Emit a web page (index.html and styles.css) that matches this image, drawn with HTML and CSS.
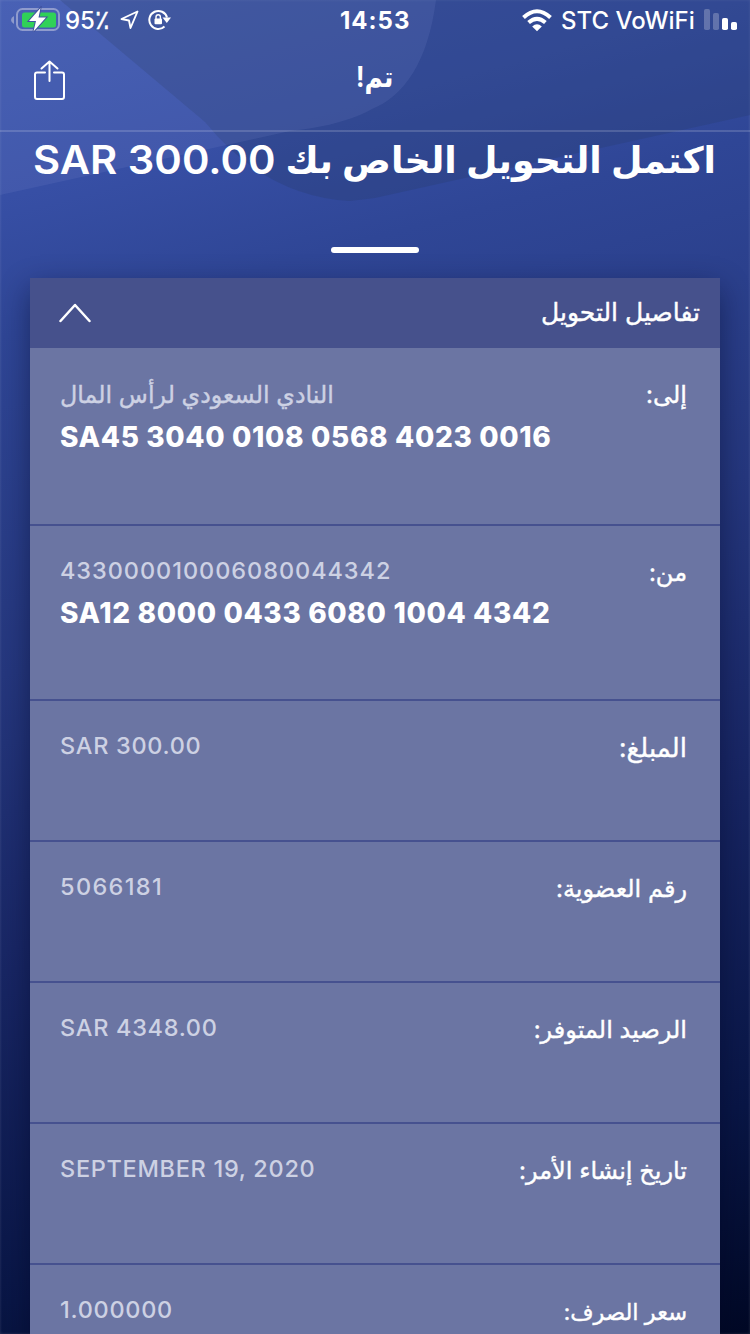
FILE: index.html
```html
<!DOCTYPE html>
<html lang="ar" dir="rtl">
<head>
<meta charset="utf-8">
<title>تم!</title>
<link rel="stylesheet" href="styles.css">
</head>
<body>
<div class="screen">
  <svg class="backdrop" viewBox="0 0 750 210" aria-hidden="true">
    <path class="shade-dark" d="M60 0L205 122Q265 196 350 201L375 198L750 115V0Z"/>
    <path class="shade-light" d="M0 0H436C428 62 404 96 372 109C345 124 310 129 290 131L0 195Z"/>
  </svg>
  <div class="statusbar" dir="ltr">
    <svg class="battery" width="50" height="26" viewBox="0 0 50 26">
      <path d="M3 10v8q-3-1.500-3-4t3-4z" fill="#8e9acb"/>
      <rect x="6" y="3" width="42" height="21" rx="5.500" fill="none" stroke="#8f9bcd" stroke-width="2"/>
      <rect x="11" y="6.500" width="34" height="15" rx="2.500" fill="#30d158"/>
      <path d="M29.500 2L18 15h7l-2.500 10.500L35 11.500h-7.500z" fill="#fff" stroke="#40539f" stroke-width="2" paint-order="stroke"/>
    </svg>
    <span class="percent">95<span class="sign">٪</span></span>
    <svg class="locate" width="20" height="20" viewBox="0 0 20 20"><path d="M17.500 1.500L1.500 9l7.500 1.500L10.500 18z" fill="none" stroke="#fff" stroke-width="1.900" stroke-linejoin="round"/></svg>
    <svg class="rotation" width="24" height="22" viewBox="0 0 24 22">
      <path d="M16.500 17.500A9 9 0 1 1 19 8.500" fill="none" stroke="#fff" stroke-width="2"/>
      <path d="M14.500 8.500H23l-4.200 5.500z" fill="#fff"/>
      <rect x="6.500" y="9.500" width="7.500" height="5.800" rx="1" fill="#fff"/>
      <path d="M8 10V8a2.200 2.200 0 0 1 4.400 0v2" fill="none" stroke="#fff" stroke-width="1.400"/>
    </svg>
    <span class="clock">14:53</span>
    <svg class="wifi" width="30" height="23" viewBox="0 0 30 23" fill="none" stroke="#fff" stroke-width="4">
      <path d="M1.500 8.500Q15-4 28.500 8.500"/>
      <path d="M6.600 13.600Q15 6.200 23.400 13.600"/>
      <path d="M10.200 17.500Q15 13.200 19.800 17.500L15 22.300z" fill="#fff" stroke="none"/>
    </svg>
    <span class="carrier">STC VoWiFi</span>
    <svg class="signal" width="34" height="22" viewBox="0 0 34 22" fill="#fff">
      <rect x="0" y="0" width="6" height="21" rx="1.800" opacity=".24"/>
      <rect x="9" y="4" width="6" height="17" rx="1.800" opacity=".24"/>
      <rect x="18" y="9" width="6" height="12" rx="1.800"/>
      <rect x="27" y="13" width="6" height="8" rx="1.800"/>
    </svg>
  </div>
  <header class="navbar">
    <h1 class="title">تم!</h1>
    <svg class="share" width="32" height="42" viewBox="0 0 32 42" fill="none" stroke="#fff" stroke-width="2" stroke-linejoin="round" stroke-linecap="round">
      <path d="M11 12.500H3Q1 12.500 1 14.500V37Q1 39 3 39H28Q30 39 30 37V14.500Q30 12.500 28 12.500H20M15.500 21V1.500M7.500 8.500L15.500 1.500L23.500 8.500"/>
    </svg>
  </header>
  <main>
    <h2 class="headline"><span class="headline-text">اكتمل التحويل الخاص بك</span><bdi class="headline-sum">SAR 300.00</bdi></h2>
    <div class="divider"></div>
    <section class="card">
      <div class="card-head">
        <span class="card-title">تفاصيل التحويل</span>
        <svg class="chevron" width="32" height="20" viewBox="0 0 32 20" fill="none" stroke="#fff" stroke-width="2.500" stroke-linecap="round" stroke-linejoin="round"><path d="M1.500 18L16 2L30.500 18"/></svg>
      </div>
      <div class="row row-to"><span class="label">إلى:</span><div class="value"><span class="bank">النادي السعودي لرأس المال</span><b class="iban">SA45 3040 0108 0568 4023 0016</b></div></div>
      <div class="row row-from"><span class="label">من:</span><div class="value"><span class="account">433000010006080044342</span><b class="iban">SA12 8000 0433 6080 1004 4342</b></div></div>
      <div class="row"><span class="label label-amount">المبلغ:</span><div class="value">SAR 300.00</div></div>
      <div class="row"><span class="label">رقم العضوية:</span><div class="value value-member">5066181</div></div>
      <div class="row"><span class="label">الرصيد المتوفر:</span><div class="value">SAR 4348.00</div></div>
      <div class="row"><span class="label">تاريخ إنشاء الأمر:</span><div class="value">SEPTEMBER 19, 2020</div></div>
      <div class="row"><span class="label label-rate">سعر الصرف:</span><div class="value">1.000000</div></div>
    </section>
  </main>
</div>
</body>
</html>
```
FILE: styles.css
```css
* { box-sizing: border-box; }
body { margin: 0; }
.screen {
  position: relative;
  width: 750px;
  height: 1334px;
  overflow: hidden;
  color: #fff;
  font-family: Inter, "DejaVu Sans", sans-serif;
  background: linear-gradient(165deg, #3f59b0 0%, #374fa5 13%, #2f4696 22%, #25377e 44%, #192766 62%, #091646 85%, #010825 100%);
  box-shadow: inset 0 0 3px rgba(255, 255, 255, .16);
}
.backdrop { position: absolute; top: 0; left: 0; width: 750px; height: 210px; }
.shade-dark { fill: #2b3f76; fill-opacity: .38; }
.shade-light { fill: #8497d8; fill-opacity: .14; }
.statusbar {
  position: relative;
  display: flex;
  align-items: center;
  height: 40px;
  padding-left: 11px;
  white-space: nowrap;
}
.battery { margin-top: -3px; }
.percent { width: 53px; margin-left: 4px; padding-top: 1px; font-size: 24px; line-height: 40px; font-weight: 500; }
.sign { display: inline-block; font-size: 27px; line-height: 30px; -webkit-text-stroke: .4px #fff; }
.locate { margin-left: 2px; }
.rotation { margin-left: 8px; }
.clock { width: 72px; margin-left: 168px; font-size: 24px; font-weight: 700; letter-spacing: 1px; }
.wifi { margin-left: 110px; }
.carrier { width: 136px; margin-left: 9px; font-size: 24px; font-weight: 500; }
.clock, .carrier { padding-top: 1px; }
.signal { margin-left: 7px; }
.navbar {
  position: relative;
  display: grid;
  grid-template-columns: 1fr auto 1fr;
  align-items: center;
  height: 92px;
  padding: 0 34px 8px;
  border-bottom: 2px solid rgba(255, 255, 255, .16);
}
.title { grid-column: 2; margin: 0 0 9px; font-size: 29px; line-height: 40px; font-weight: 700; transform: scaleX(.86); }
.share { justify-self: end; }
main { position: relative; padding: 0 30px; }
.headline {
  display: flex;
  justify-content: space-between;
  align-items: center;
  height: 55px;
  margin: 0;
  padding: 0 4px;
  font-size: 39px;
  font-weight: 600;
  white-space: nowrap;
}
.headline-text { font-size: 36.300px; }
.headline-sum { transform: scaleX(1.07); transform-origin: left; margin-left: -1px; }
.divider { width: 88px; height: 6px; margin: 60px auto 25px; border-radius: 3px; background: #fff; }
.card { background: #6b75a3; box-shadow: 0 10px 28px rgba(2, 8, 35, .45); }
.card-head {
  display: flex;
  justify-content: space-between;
  align-items: center;
  height: 70px;
  padding: 0 20px 2px 29px;
  background: #46518c;
}
.card-title, .label, .bank { -webkit-text-stroke: .4px currentColor; }
.card-title { font-size: 25px; }
.chevron { margin-top: 2px; }
.row {
  display: flex;
  justify-content: space-between;
  height: 141px;
  padding: 29px 33px 0 30px;
  border-bottom: 2px solid #46518f;
  white-space: nowrap;
}
.row-to { height: 178px; }
.row-from { height: 175px; }
.label { font-size: 24px; line-height: 36px; }
.label-amount { font-size: 26px; }
.label-rate { font-size: 22.500px; }
.value {
  direction: ltr;
  display: flex;
  flex-direction: column;
  align-items: flex-start;
  font-size: 23.500px;
  line-height: 32px;
  font-weight: 550;
  letter-spacing: .7px;
  color: #cdd1e3;
}
.account { letter-spacing: .95px; }
.value-member { letter-spacing: 1.350px; }
.bank { direction: rtl; margin-top: 2px; font-size: 23.800px; font-weight: 400; letter-spacing: 0; }
.iban { margin-top: 6px; font-size: 28px; line-height: 40px; font-weight: 800; letter-spacing: .64px; color: #fff; }
```
